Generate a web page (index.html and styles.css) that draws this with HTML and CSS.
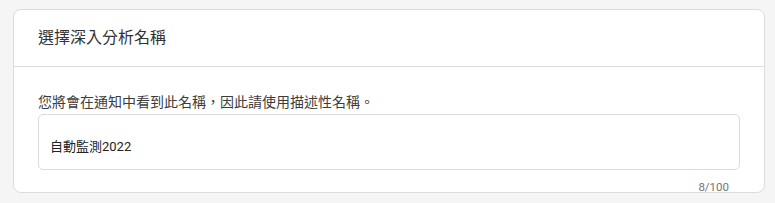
FILE: index.html
```html
<!DOCTYPE html>
<html lang="zh-Hant">
<head>
<meta charset="utf-8">
<link rel="stylesheet" href="styles.css">
</head>
<body>
<div class="card">
  <div class="card-header">
    <h2 class="title">選擇深入分析名稱</h2>
  </div>
  <div class="card-body">
    <p class="desc">您將會在通知中看到此名稱，因此請使用描述性名稱。</p>
    <div class="field">
      <div class="input">自動監測2022</div>
      <div class="counter">8/100</div>
    </div>
  </div>
</div>
</body>
</html>
```
FILE: styles.css
```css
html, body {
  margin: 0;
  padding: 0;
  background: #f5f5f5;
}
body {
  padding: 9px 10px 0 13px;
  font-family: Roboto, "Noto Sans CJK TC", "Noto Sans", sans-serif;
  color: #333;
}
.card {
  background: #fff;
  border: 1px solid #dcdcdc;
  border-radius: 8px;
  height: 184px;
  box-sizing: border-box;
}
.card-header {
  height: 56px;
  display: flex;
  align-items: center;
  padding: 0 24px;
  border-bottom: 1px solid #dcdcdc;
}
.title {
  margin: 0;
  font-size: 16px;
  font-weight: 400;
  color: #333;
  line-height: 20px;
}
.card-body {
  padding: 25px 24px 0 24px;
}
.desc {
  margin: 0 0 2px;
  font-size: 14px;
  line-height: 20px;
  color: #3c3c3c;
}
.field {
  display: flex;
  flex-direction: column;
}
.input {
  height: 56px;
  box-sizing: border-box;
  border: 1px solid #dcdcdc;
  border-radius: 5px;
  padding: 23px 11px 0;
  font-size: 13px;
  line-height: 18px;
  color: #222;
}
.counter {
  align-self: flex-end;
  margin-top: 10px;
  margin-right: 11px;
  font-size: 11.5px;
  line-height: 14px;
  color: #757575;
}
```
